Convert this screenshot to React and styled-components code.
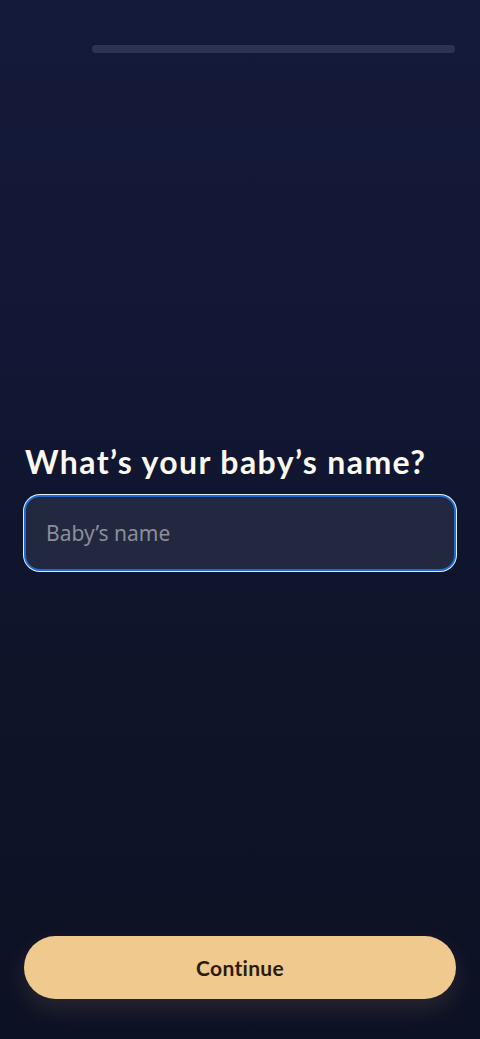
import React from "react";
import styled, { createGlobalStyle } from "styled-components";

const Global = createGlobalStyle`
  html, body { margin: 0; padding: 0; }
  body { background: #0e1226; }
  * { box-sizing: border-box; }
`;

const Screen = styled.div`
  width: 480px;
  height: 1039px;
  display: flex;
  flex-direction: column;
  background: linear-gradient(180deg, #141a39 0%, #111734 35%, #0f1429 65%, #0d1124 100%);
  font-family: "Lato", "Noto Sans", sans-serif;
`;

const Header = styled.div`
  padding: 45px 25px 0 92px;
`;

const Track = styled.div`
  height: 8px;
  border-radius: 4px;
  background: #2d3451;
`;

const Content = styled.div`
  margin-top: 391px;
  padding: 0 24px;
  display: flex;
  flex-direction: column;
  gap: 16px;
`;

const Title = styled.h1`
  margin: 0 0 0 1px;
  font-family: "Lato", sans-serif;
  font-weight: 700;
  font-size: 32px;
  line-height: 35px;
  letter-spacing: 1.4px;
  color: #fbf8f0;
`;

const Input = styled.input`
  width: 432px;
  height: 76px;
  border-radius: 16px;
  border: 2px solid #1f6ad2;
  box-shadow: 0 0 0 1px #e4eef8;
  background: #222840;
  padding: 0 20px;
  font-family: "Noto Sans", "Open Sans", sans-serif;
  font-size: 21px;
  color: #e8e8ee;
  outline: none;
  &::placeholder { color: #8a8e99; }
`;

const Spacer = styled.div`
  flex: 1;
`;

const Footer = styled.div`
  padding: 0 24px 40px;
`;

const Button = styled.button`
  width: 432px;
  height: 63px;
  border: none;
  border-radius: 32px;
  background: #f0c98e;
  box-shadow: 0 10px 24px rgba(240, 201, 142, 0.12);
  font-family: "Lato", sans-serif;
  font-weight: 700;
  font-size: 21px;
  letter-spacing: 0.3px;
  color: #2a1d0c;
  cursor: pointer;
`;

export default function App() {
  return (
    <>
      <Global />
      <Screen>
        <Header>
          <Track />
        </Header>
        <Content>
          <Title>What’s your baby’s name?</Title>
          <Input placeholder="Baby’s name" />
        </Content>
        <Spacer />
        <Footer>
          <Button>Continue</Button>
        </Footer>
      </Screen>
    </>
  );
}
